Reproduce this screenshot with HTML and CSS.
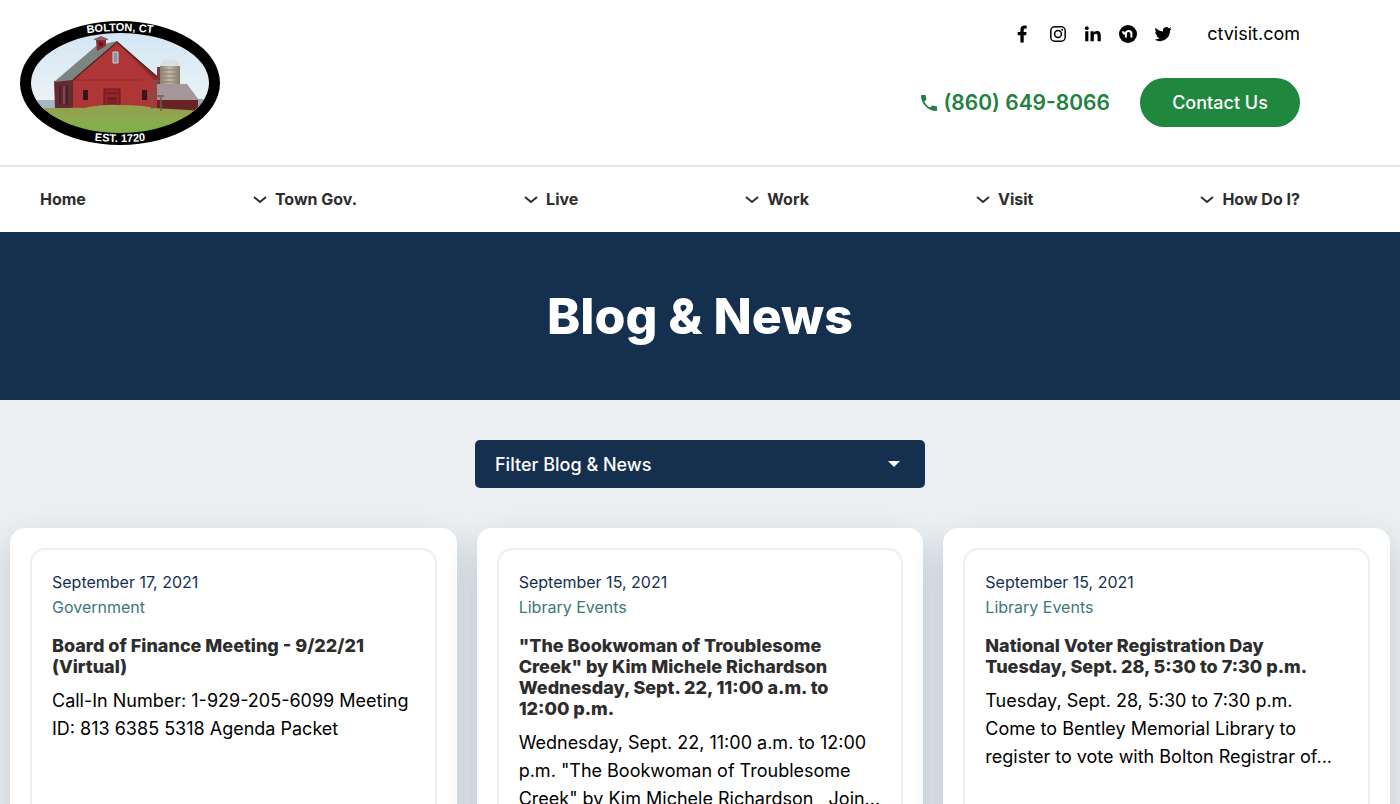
FILE: index.html
```html
<!DOCTYPE html>
<html lang="en">
<head>
    <meta charset="UTF-8">
    <meta name="viewport" content="width=device-width, initial-scale=1.0">
    <title>Blog &amp; News | Bolton, CT</title>
    <link rel="stylesheet" href="styles.css">
</head>
<body>
    <header class="site-header">
        <a class="logo" href="/" aria-label="Bolton, CT">
            <svg width="200" height="126" viewBox="0 0 200 126">
                <defs>
                    <clipPath id="oval"><ellipse cx="100" cy="63" rx="89" ry="50"/></clipPath>
                    <linearGradient id="sky" x1="0" y1="0" x2="0" y2="1">
                        <stop offset="0" stop-color="#cfe3f3"/>
                        <stop offset="1" stop-color="#eef4f6"/>
                    </linearGradient>
                    <linearGradient id="grass" x1="0" y1="0" x2="0" y2="1">
                        <stop offset="0" stop-color="#93a555"/>
                        <stop offset="0.400" stop-color="#86ae4c"/>
                        <stop offset="1" stop-color="#76b046"/>
                    </linearGradient>
                    <linearGradient id="silo" x1="0" y1="0" x2="1" y2="0">
                        <stop offset="0" stop-color="#8d8272"/>
                        <stop offset="0.5" stop-color="#c4b9a4"/>
                        <stop offset="1" stop-color="#857a6a"/>
                    </linearGradient>
                    <path id="arc-top" d="M50 16Q100 6 150 16"/>
                    <path id="arc-bottom" d="M50 117Q100 127 150 117"/>
                </defs>
                <ellipse cx="100" cy="63" rx="100" ry="62"/>
                <g clip-path="url(#oval)">
                    <rect width="200" height="90" fill="url(#sky)"/>
                    <path d="M0 80h36v9H0z" fill="#a3b6c4"/>
                    <path d="M176 79h24v11h-24z" fill="#8fa9b5"/>
                    <path d="M0 88h200v38H0z" fill="url(#grass)"/>
                    <!-- silo -->
                    <path d="M140 46h20v20h-20z" fill="url(#silo)"/>
                    <path d="M140 46q0-6 10-7q9 1 10 7z" fill="#d9dfe4"/>
                    <path d="M140 50h20M140 54h20M140 58h20M140 62h20" stroke="#8c806d" stroke-width="1"/>
                    <path d="M137 47h3v20h-3z" fill="#7b3a34"/>
                    <!-- shed -->
                    <path d="M136 79h42v12h-42z" fill="#6b2226"/>
                    <path d="M136 64h31l12 16h-43z" fill="#a3979a"/>
                    <!-- barn -->
                    <path d="M34 61l19-2v29H35z" fill="#66292f"/>
                    <path d="M40 66v18M47 65v20" stroke="#43222a" stroke-width="2"/>
                    <path d="M44 66v18" stroke="#8f6a70" stroke-width="1"/>
                    <path d="M53 59l44-37l40 35v31H53z" fill="#ae3636"/>
                    <path d="M97 22l40 34v7z" fill="#8f2b2c"/>
                    <path d="M53 60h70" stroke="#932b2d" stroke-width="1"/>
                    <path d="M97 21l-21 5l-42 36l19-2z" fill="#7d8583"/>
                    <path d="M53 60l44-38l40 35" fill="none" stroke="#542529" stroke-width="1.500"/>
                    <path d="M76 20h10v6l-9 5z" fill="#8b2c30"/>
                    <path d="M79 22h4v4h-4z" fill="#541c20"/>
                    <path d="M74 19l7-3l7 3v1H74z" fill="#86606a"/>
                    <path d="M93 32h5v11h-5z" fill="#8198a9" stroke="#e0cfcb" stroke-width="1"/>
                    <path d="M63 70h5v10h-5zM122 70h5v10h-5z" fill="#351619"/>
                    <path d="M84 69h16v18H84z" fill="#942427" stroke="#63191d" stroke-width="1"/>
                    <path d="M86 73h12M86 78h12M89 78v8M92 78v8M95 78v8" stroke="#5c171b" stroke-width="1"/>
                    <path d="M24 90q20-3 40-2q20-4 36-3q24 0 34 3l50 3v6H24z" fill="#92a350"/>
                    <!-- post and sign -->
                    <path d="M133 61h6M134 61v15M128 76h16M132 76v13M141 77v14" fill="none" stroke="#6e5c50" stroke-width="1.500"/>
                </g>
                <g fill="#fff" font-family="Liberation Sans, sans-serif" font-size="11" font-weight="bold" text-anchor="middle">
                    <text><textPath href="#arc-top" startOffset="50%">BOLTON, CT</textPath></text>
                    <text><textPath href="#arc-bottom" startOffset="50%">EST. 1720</textPath></text>
                </g>
            </svg>
        </a>
        <div class="header-right">
            <div class="social">
                <a href="#" aria-label="Facebook"><svg width="18" height="18" viewBox="0 0 18 18"><path d="M6.400 17.500V10.200H3.700V7h2.700V4.800C6.400 2.100 8 .600 10.400.600c1.200 0 2.300.200 2.300.200v2.600h-1.300c-1.300 0-1.700.800-1.700 1.600v2h2.900l-.500 3.200H9.700v7.300z"/></svg></a>
                <a href="#" aria-label="Instagram"><svg width="18" height="18" viewBox="0 0 18 18"><rect x="1.800" y="1.800" width="14.400" height="14.400" rx="4" fill="none" stroke="#000" stroke-width="1.500"/><circle cx="9" cy="9" r="3.400" fill="none" stroke="#000" stroke-width="1.500"/><circle cx="13.200" cy="4.800" r="1"/></svg></a>
                <a href="#" aria-label="LinkedIn"><svg width="18" height="18" viewBox="0 0 18 18"><circle cx="2.800" cy="3.200" r="1.900"/><path d="M1.200 6.300h3.200v10H1.200zM6.500 6.300h3.100v1.400c.500-.900 1.600-1.700 3.200-1.700 3.300 0 4 2.100 4 4.900v5.400h-3.200v-4.800c0-1.200-.1-2.700-1.700-2.700-1.700 0-2.100 1.300-2.100 2.600v4.900H6.500z"/></svg></a>
                <a href="#" aria-label="Nextdoor"><svg width="18" height="18" viewBox="0 0 18 18"><circle cx="9" cy="9" r="9"/><path d="M4 6.200c0 1.600.700 2.300 2.400 2.500M6.900 12.500V8.600c0-1.600 1-2.500 2.700-2.500s2.800 1 2.800 2.600v3.800" fill="none" stroke="#fff" stroke-width="2"/></svg></a>
                <a href="#" aria-label="Twitter"><svg width="18" height="18" viewBox="0 0 24 24"><path d="M23.600 4.900c-.8.400-1.700.6-2.700.8 1-.6 1.700-1.500 2-2.600-.9.500-1.900.9-3 1.100a4.700 4.700 0 0 0-8 4.300C8 8.300 4.500 6.400 2.200 3.600c-1.200 2.100-.6 4.900 1.500 6.300-.8 0-1.500-.2-2.100-.6 0 2.200 1.500 4.300 3.800 4.700-.7.200-1.400.2-2.100.1.600 1.900 2.300 3.200 4.400 3.300A9.500 9.500 0 0 1 .7 19.300 13.400 13.400 0 0 0 21.300 7.400c.9-.7 1.700-1.500 2.300-2.500z"/></svg></a>
                <a class="visit-link" href="#">ctvisit.com</a>
            </div>
            <div class="contact">
                <a class="phone" href="tel:8606498066"><svg width="18" height="18" viewBox="0 0 18 18"><path d="M1 1h4.500l1 4.500-2.200 2c1.200 2.500 3.200 4.700 5.800 6.100l2.200-2.100 4.700 1V17C8.500 17.500.5 9.500 1 1z"/></svg>(860) 649-8066</a>
                <a class="contact-btn" href="#">Contact Us</a>
            </div>
        </div>
    </header>

    <nav class="main-nav">
        <a href="/">Home</a>
        <a href="#"><svg width="14" height="10" viewBox="0 0 14 10"><path d="M1 2l6 5l6-5"/></svg>Town Gov.</a>
        <a href="#"><svg width="14" height="10" viewBox="0 0 14 10"><path d="M1 2l6 5l6-5"/></svg>Live</a>
        <a href="#"><svg width="14" height="10" viewBox="0 0 14 10"><path d="M1 2l6 5l6-5"/></svg>Work</a>
        <a href="#"><svg width="14" height="10" viewBox="0 0 14 10"><path d="M1 2l6 5l6-5"/></svg>Visit</a>
        <a href="#"><svg width="14" height="10" viewBox="0 0 14 10"><path d="M1 2l6 5l6-5"/></svg>How Do I?</a>
    </nav>

    <section class="hero">
        <h1>Blog &amp; News</h1>
    </section>

    <main>
        <button class="filter" type="button">Filter Blog &amp; News
            <svg width="12" height="6" viewBox="0 0 12 6"><path d="M0 0h12L6 6z" fill="#fff"/></svg>
        </button>

        <div class="cards">
            <article class="card">
                <div class="card-inner">
                    <p class="date">September 17, 2021</p>
                    <a class="category" href="#">Government</a>
                    <h2>Board of Finance Meeting - 9/22/21 (Virtual)</h2>
                    <p class="excerpt">Call-In Number: 1-929-205-6099 Meeting ID: 813 6385 5318 Agenda Packet</p>
                </div>
            </article>
            <article class="card">
                <div class="card-inner">
                    <p class="date">September 15, 2021</p>
                    <a class="category" href="#">Library Events</a>
                    <h2>"The Bookwoman of Troublesome Creek" by Kim Michele Richardson Wednesday, Sept. 22, 11:00 a.m. to 12:00 p.m.</h2>
                    <p class="excerpt">Wednesday, Sept. 22, 11:00 a.m. to 12:00 p.m. "The Bookwoman of Troublesome Creek" by Kim Michele Richardson &nbsp; Join...</p>
                </div>
            </article>
            <article class="card">
                <div class="card-inner">
                    <p class="date">September 15, 2021</p>
                    <a class="category" href="#">Library Events</a>
                    <h2>National Voter Registration Day<br>Tuesday, Sept. 28, 5:30 to 7:30 p.m.</h2>
                    <p class="excerpt">Tuesday, Sept. 28, 5:30 to 7:30 p.m.<br>Come to Bentley Memorial Library to register to vote with Bolton Registrar of...</p>
                </div>
            </article>
        </div>
    </main>
</body>
</html>
```
FILE: styles.css
```css
/* General Styles */
* {
    box-sizing: border-box;
}

body {
    font-family: 'Inter', sans-serif;
    font-size: 18px;
    line-height: 28px;
    background-color: #ebeff2;
    color: #000;
    margin: 0;
}

a {
    color: inherit;
    text-decoration: none;
}

h1, h2, p {
    margin: 0;
}

svg {
    display: block;
    flex: none;
}

/* Header */
.site-header {
    display: flex;
    justify-content: space-between;
    background-color: #fff;
    border-bottom: 2px solid #e6e6e6;
    padding: 20px 100px 19px 20px;
}

.header-right {
    display: flex;
    flex-direction: column;
    align-items: flex-end;
    gap: 30px;
}

.social {
    display: flex;
    align-items: center;
    gap: 17px;
}

.visit-link {
    margin-left: 18px;
}

.contact {
    display: flex;
    align-items: center;
    gap: 30px;
}

.phone {
    display: flex;
    align-items: center;
    gap: 6px;
    color: #22813f;
    fill: #22813f;
    font-size: 21px;
    font-weight: 600;
}

.contact-btn {
    background-color: #20873f;
    color: #fff;
    border-radius: 25px;
    width: 160px;
    line-height: 49px;
    text-align: center;
    font-weight: 500;
}

/* Navigation */
.main-nav {
    display: flex;
    justify-content: space-between;
    background-color: #fff;
    padding: 20px 100px 20px 40px;
    font-size: 16px;
    font-weight: 700;
    line-height: 25px;
    color: #2d2d2d;
}

.main-nav a {
    display: flex;
    align-items: center;
    gap: 8px;
}

.main-nav path {
    fill: none;
    stroke: #2d2d2d;
    stroke-width: 2;
}

/* Page title */
.hero {
    background-color: #15304f;
    color: #fff;
    padding: 54px 20px;
    text-align: center;
}

.hero h1 {
    font-size: 50px;
    font-weight: 800;
    line-height: 60px;
}

/* Filter */
main {
    padding: 40px 10px;
}

.filter {
    display: flex;
    align-items: center;
    justify-content: space-between;
    width: 100%;
    max-width: 450px;
    height: 48px;
    margin: 0 auto 40px;
    padding: 0 25px 0 20px;
    border: none;
    border-radius: 5px;
    background-color: #15304f;
    color: #fff;
    font-family: inherit;
    font-size: 18px;
    font-weight: 500;
    cursor: pointer;
}

/* Blog cards */
.cards {
    display: grid;
    grid-template-columns: repeat(3, 1fr);
    gap: 20px;
}

.card {
    display: flex;
    background-color: #fff;
    border-radius: 15px;
    padding: 20px;
    box-shadow: 0 15px 35px rgba(21, 48, 64, 0.2);
}

.card-inner {
    flex: 1;
    border: 2px solid #eee;
    border-radius: 15px;
    padding: 20px 20px 60px;
}

.date, .category {
    display: block;
    font-size: 16px;
    line-height: 25px;
    color: #15304f;
}

.category {
    color: #3d7878;
}

.card h2 {
    margin: 15px 0 10px;
    font-size: 18px;
    font-weight: 800;
    line-height: 21px;
    color: #2d2d2d;
}
```
